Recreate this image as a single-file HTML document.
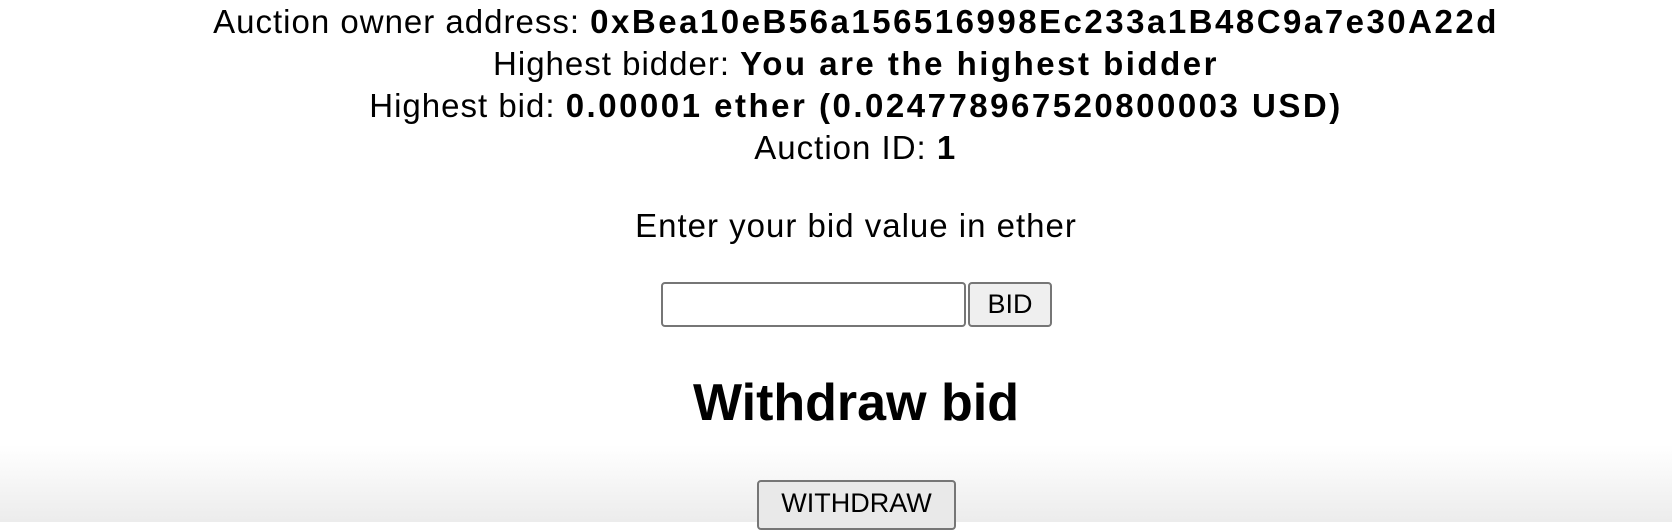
<!DOCTYPE html>
<html><head><style>
html,body{margin:0;padding:0;width:1672px;height:522px;overflow:hidden;
background:linear-gradient(to bottom,#fff 0,#fff 445px,#ececec 522px);
font-family:"Liberation Sans",sans-serif;color:#000;}
.l{position:absolute;left:40px;width:1632px;text-align:center;font-size:33px;letter-spacing:1px;line-height:42px;white-space:nowrap;}
b{font-weight:bold;letter-spacing:2.5px;}
.inp{position:absolute;left:661px;top:282px;width:305px;height:45px;border:2px solid #767676;border-radius:4px;background:#fff;box-sizing:border-box;}
.btn{position:absolute;box-sizing:border-box;border:2px solid #767676;border-radius:4px;background:#efefef;font-size:27px;text-align:center;font-family:"Liberation Sans",sans-serif;}
h2{position:absolute;left:40px;width:1632px;text-align:center;margin:0;font-size:52px;top:370px;line-height:66px;}
</style></head><body>
<div class="l" style="top:1px">Auction owner address: <b>0xBea10eB56a156516998Ec233a1B48C9a7e30A22d</b></div>
<div class="l" style="top:43px">Highest bidder: <b>You are the highest bidder</b></div>
<div class="l" style="top:85px">Highest bid: <b>0.00001 ether (0.024778967520800003 USD)</b></div>
<div class="l" style="top:127px">Auction ID: <b>1</b></div>
<div class="l" style="top:205px">Enter your bid value in ether</div>
<div class="inp"></div>
<div class="btn" style="left:968px;top:282px;width:84px;height:45px;line-height:40px;">BID</div>
<h2>Withdraw bid</h2>
<div class="btn" style="left:757px;top:480px;width:199px;height:50px;line-height:42px;background:#e9e9e9;">WITHDRAW</div>
</body></html>
